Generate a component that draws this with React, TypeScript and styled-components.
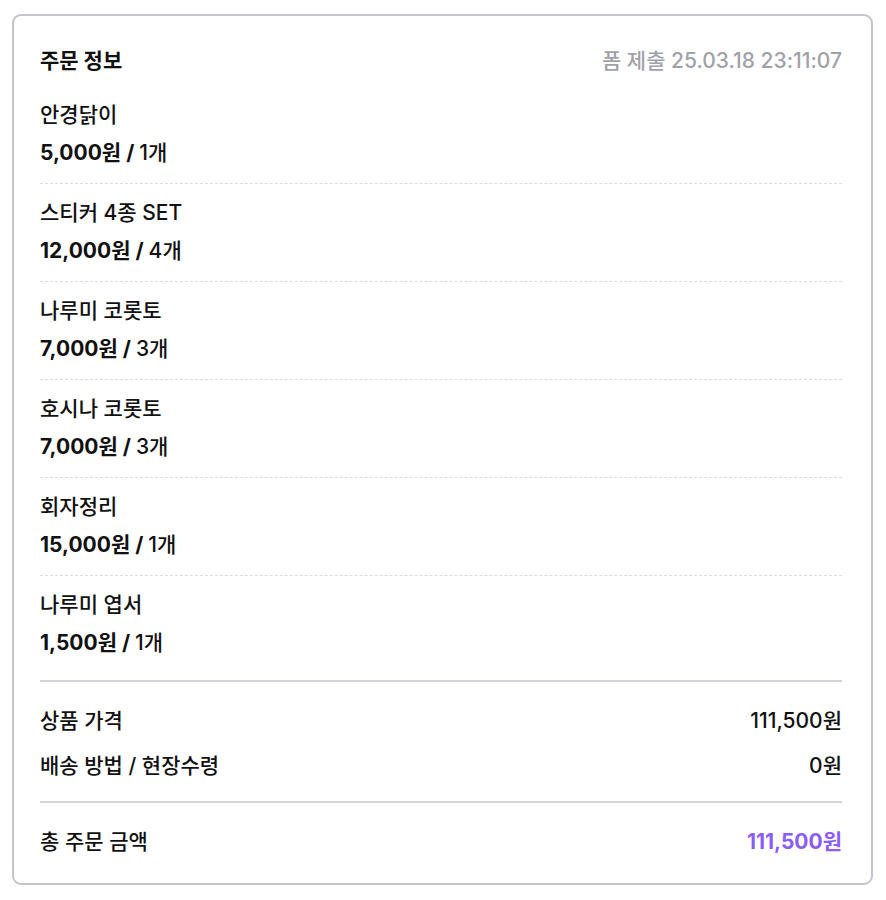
import React from "react";
import styled, { createGlobalStyle } from "styled-components";

const GlobalStyle = createGlobalStyle`
    body {
        margin: 0;
        background: #ffffff;
        font-family: "Inter", "Noto Sans CJK KR", sans-serif;
        color: #111111;
    }
`;

type Item = { name: string; price: string; qty: string };

const items: Item[] = [
    { name: "안경닭이", price: "5,000원", qty: "1개" },
    { name: "스티커 4종 SET", price: "12,000원", qty: "4개" },
    { name: "나루미 코롯토", price: "7,000원", qty: "3개" },
    { name: "호시나 코롯토", price: "7,000원", qty: "3개" },
    { name: "회자정리", price: "15,000원", qty: "1개" },
    { name: "나루미 엽서", price: "1,500원", qty: "1개" },
];

const OrderInfoCard = () => {
    return (
        <>
            <GlobalStyle />
            <Card>
                <Header>
                    <Title>주문 정보</Title>
                    <Submitted>폼 제출 25.03.18 23:11:07</Submitted>
                </Header>

                <ItemList>
                    {items.map((item) => (
                        <ItemRow key={item.name}>
                            <ItemName>{item.name}</ItemName>
                            <ItemPrice>
                                {item.price} / <Qty>{item.qty}</Qty>
                            </ItemPrice>
                        </ItemRow>
                    ))}
                </ItemList>

                <Divider />

                <Summary>
                    <SummaryRow>
                        <span>상품 가격</span>
                        <span>111,500원</span>
                    </SummaryRow>
                    <SummaryRow>
                        <span>배송 방법 / 현장수령</span>
                        <span>0원</span>
                    </SummaryRow>
                </Summary>

                <Divider />

                <TotalRow>
                    <span>총 주문 금액</span>
                    <TotalAmount>111,500원</TotalAmount>
                </TotalRow>
            </Card>
        </>
    );
};

export default OrderInfoCard;

// stylesheet

const Card = styled.div`
    margin: 14px 13px 14px 12px;
    border: 2px solid #c4c4cc;
    border-radius: 9px;
    padding: 32px 29px 28px 26px;
    display: flex;
    flex-direction: column;
`;

const Header = styled.div`
    display: flex;
    justify-content: space-between;
    align-items: center;
    line-height: 26px;
    margin-bottom: 12px;
`;

const Title = styled.span`
    font-size: 21px;
    font-weight: 700;
`;

const Submitted = styled.span`
    font-size: 21px;
    font-weight: 500;
    color: #a1a1aa;
`;

const ItemList = styled.div`
    display: flex;
    flex-direction: column;
`;

const ItemRow = styled.div`
    display: flex;
    flex-direction: column;
    gap: 12px;
    padding: 16px 0 17px;
    border-bottom: 1px dashed #dcdce0;

    &:last-child {
        border-bottom: none;
    }
`;

const ItemName = styled.div`
    font-size: 21px;
    font-weight: 500;
    line-height: 26px;
`;

const ItemPrice = styled.div`
    font-size: 21px;
    font-weight: 700;
    line-height: 26px;
`;

const Qty = styled.span`
    font-weight: 500;
`;

const Divider = styled.div`
    height: 2px;
    background: #d4d4d8;
    margin-top: 7px;
`;

const Summary = styled.div`
    display: flex;
    flex-direction: column;
    gap: 19px;
    padding: 26px 0 22px;

    & + ${Divider} {
        margin-top: 0;
    }
`;

const SummaryRow = styled.div`
    display: flex;
    justify-content: space-between;
    font-size: 21px;
    font-weight: 500;
    line-height: 26px;
`;

const TotalRow = styled(SummaryRow)`
    margin-top: 26px;
`;

const TotalAmount = styled.span`
    font-weight: 700;
    color: #8b5cf6;
`;
